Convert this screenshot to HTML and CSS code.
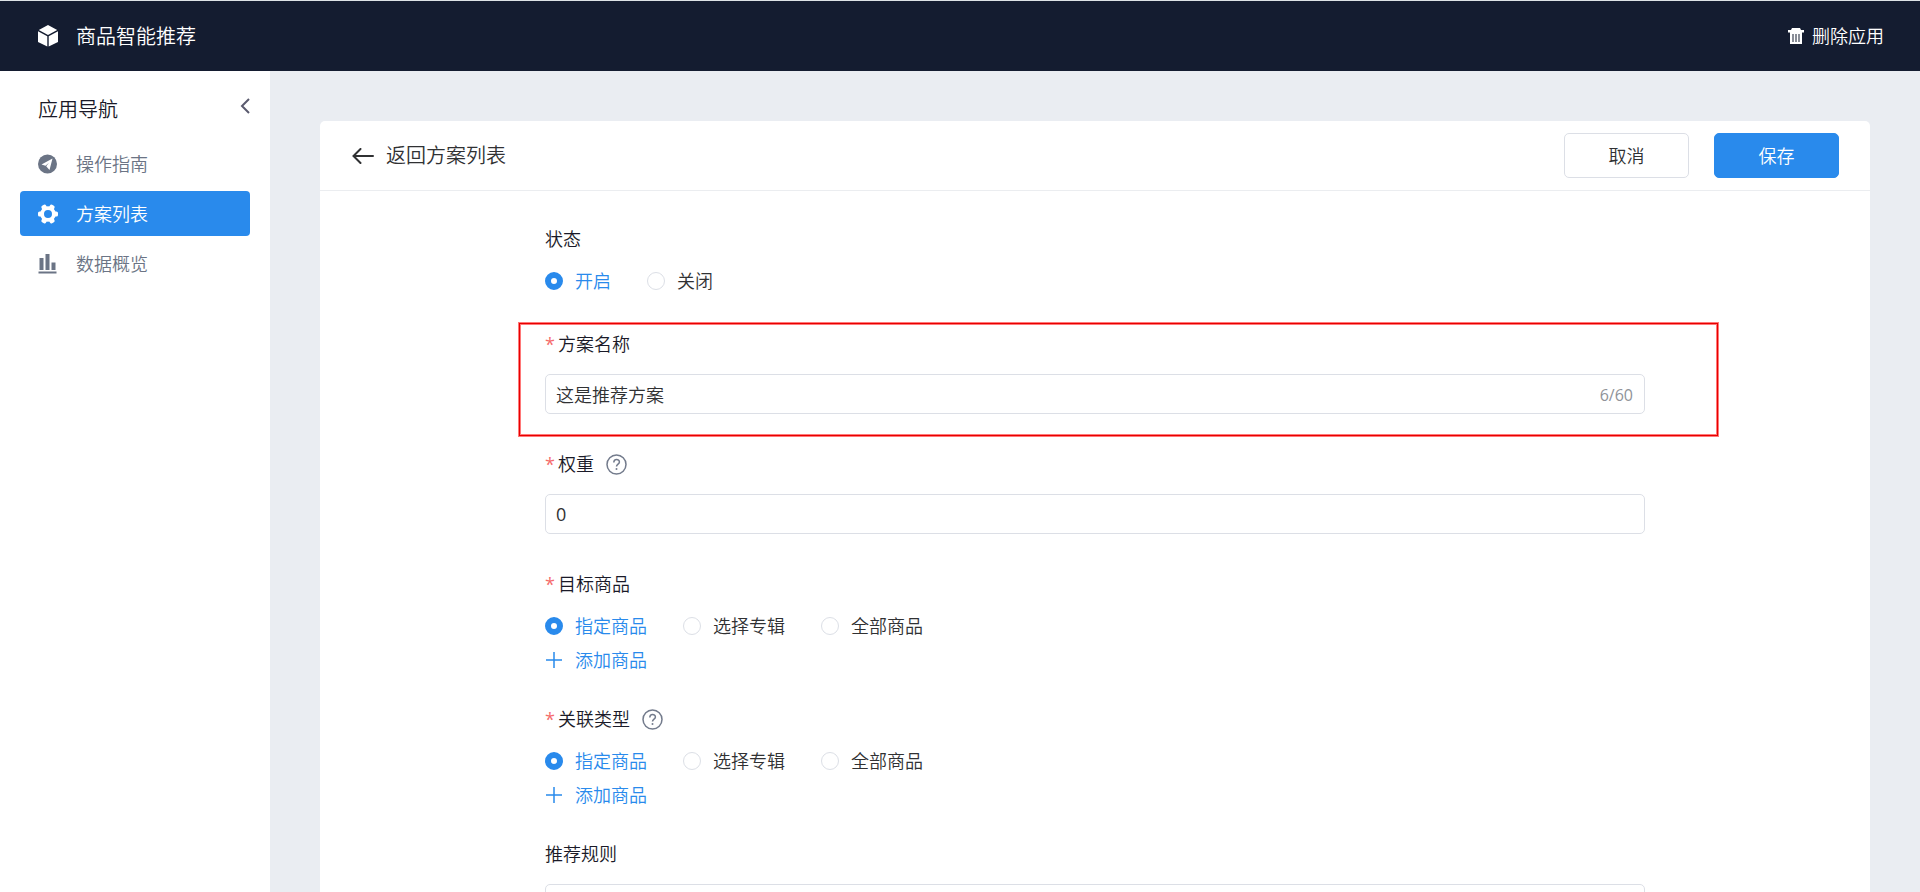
FILE: index.html
```html
<!DOCTYPE html>
<html lang="zh-CN">
<head>
<meta charset="utf-8">
<title>商品智能推荐</title>
<link rel="stylesheet" href="styles.css">
</head>
<body>
<div class="app">
  <header class="topbar">
    <div class="brand">
      <svg class="icon icon-tall" viewBox="0 0 20 22" aria-hidden="true">
        <path fill="currentColor" d="M10 0 19.200 5 10 10 .8 5zM0 6.200 9.300 11.200V21.600L0 17zM20 6.200 10.700 11.200V21.600L20 17z"/>
      </svg>
      <span class="brand-name">商品智能推荐</span>
    </div>
    <button class="delete-app" type="button">
      <svg class="trash" viewBox="0 0 16 16" aria-hidden="true">
        <path fill="currentColor" fill-rule="evenodd" d="M4 0h8l1 2h3v2.500h-2v11.500H2V4.500H0V2h3zM4.500 6v8h1V6zM7.500 6v8h1V6zM10.500 6v8h1V6z"/>
      </svg>
      删除应用
    </button>
  </header>
  <div class="body">
    <aside class="sidebar">
      <div class="sidebar-head">
        <h2 class="sidebar-title">应用导航</h2>
        <button class="collapse" type="button" aria-label="收起">
          <svg viewBox="0 0 10 16" width="10" height="16" aria-hidden="true"><path fill="none" stroke="currentColor" stroke-width="2" d="M9 1 2 8l7 7"/></svg>
        </button>
      </div>
      <nav class="nav">
        <a class="nav-item" href="#guide">
          <svg class="icon" viewBox="0 0 20 20" aria-hidden="true">
            <circle cx="9.500" cy="10" r="9.500" fill="currentColor"/>
            <path fill="#fff" d="M14.500 4.500 3.500 10.500l4 1.200 3.500-3-2.800 3.600 3.300 3.700z"/>
          </svg>
          操作指南
        </a>
        <a class="nav-item nav-item-active" href="#plans">
          <svg class="icon" viewBox="0 0 20 20" aria-hidden="true">
            <g fill="currentColor">
              <path fill-rule="evenodd" d="M10 2.200a7.800 7.800 0 1 0 0 15.600 7.800 7.800 0 0 0 0-15.600zm0 3.800a4 4 0 1 1 0 8 4 4 0 0 1 0-8z"/>
              <rect id="tooth" x="0" y="7.400" width="4.500" height="5.200" rx="1.600"/>
              <use href="#tooth" transform="rotate(60 10 10)"/>
              <use href="#tooth" transform="rotate(120 10 10)"/>
              <use href="#tooth" transform="rotate(180 10 10)"/>
              <use href="#tooth" transform="rotate(240 10 10)"/>
              <use href="#tooth" transform="rotate(300 10 10)"/>
            </g>
          </svg>
          方案列表
        </a>
        <a class="nav-item" href="#data">
          <svg class="icon" viewBox="0 0 20 20" aria-hidden="true">
            <path fill="currentColor" d="M1.500 4h4v12h-4zM7.500 0h4v16h-4zM13.500 8.500h4V16h-4zM.5 17.500h18v2H.5z"/>
          </svg>
          数据概览
        </a>
      </nav>
    </aside>
    <main class="main">
      <form class="card">
        <div class="card-head">
          <a class="back" href="#plans">
            <svg viewBox="0 0 22 16" width="22" height="16" aria-hidden="true"><path fill="none" stroke="currentColor" stroke-width="2" stroke-linecap="round" d="M8.500 1 1.500 8l7 7M2 8h19"/></svg>
            返回方案列表
          </a>
          <div class="actions">
            <button class="btn" type="button">取消</button>
            <button class="btn btn-primary" type="submit">保存</button>
          </div>
        </div>
        <div class="fields">
          <div class="field" role="radiogroup" aria-labelledby="l-status">
            <div class="label" id="l-status">状态</div>
            <div class="radios">
              <label class="radio"><input type="radio" name="status" checked><span>开启</span></label>
              <label class="radio"><input type="radio" name="status"><span>关闭</span></label>
            </div>
          </div>
          <div class="field field-text field-marked">
            <label class="label required" for="name">方案名称</label>
            <div class="input-wrap">
              <input class="input" id="name" type="text" maxlength="60" value="这是推荐方案">
              <span class="count">6/60</span>
            </div>
          </div>
          <div class="field field-text">
            <div class="label-row">
              <label class="label required" for="weight">权重</label>
              <svg class="help" viewBox="0 0 21 21" aria-hidden="true"><g fill="none" stroke="currentColor" stroke-width="1.500"><circle cx="10.500" cy="10.500" r="9.500"/><path d="M7.800 8.500c0-3.900 5.600-3.800 5.600-.5 0 2.200-2.900 2.100-2.900 4.600"/></g><circle cx="10.500" cy="15" r="1" fill="currentColor"/></svg>
            </div>
            <div class="input-wrap"><input class="input input-number" id="weight" type="text" value="0"></div>
          </div>
          <div class="field" role="radiogroup" aria-labelledby="l-target">
            <div class="label required" id="l-target">目标商品</div>
            <div class="radios">
              <label class="radio"><input type="radio" name="target" checked><span>指定商品</span></label>
              <label class="radio"><input type="radio" name="target"><span>选择专辑</span></label>
              <label class="radio"><input type="radio" name="target"><span>全部商品</span></label>
            </div>
            <button class="add" type="button">
              <svg viewBox="0 0 18 18" width="18" height="18" aria-hidden="true"><path fill="none" stroke="currentColor" stroke-width="1.500" d="M9 1v16M1 9h16"/></svg>
              添加商品
            </button>
          </div>
          <div class="field" role="radiogroup" aria-labelledby="l-relation">
            <div class="label-row">
              <div class="label required" id="l-relation">关联类型</div>
              <svg class="help" viewBox="0 0 21 21" aria-hidden="true"><g fill="none" stroke="currentColor" stroke-width="1.500"><circle cx="10.500" cy="10.500" r="9.500"/><path d="M7.800 8.500c0-3.900 5.600-3.800 5.600-.5 0 2.200-2.900 2.100-2.900 4.600"/></g><circle cx="10.500" cy="15" r="1" fill="currentColor"/></svg>
            </div>
            <div class="radios">
              <label class="radio"><input type="radio" name="relation" checked><span>指定商品</span></label>
              <label class="radio"><input type="radio" name="relation"><span>选择专辑</span></label>
              <label class="radio"><input type="radio" name="relation"><span>全部商品</span></label>
            </div>
            <button class="add" type="button">
              <svg viewBox="0 0 18 18" width="18" height="18" aria-hidden="true"><path fill="none" stroke="currentColor" stroke-width="1.500" d="M9 1v16M1 9h16"/></svg>
              添加商品
            </button>
          </div>
          <div class="field field-text">
            <label class="label" for="rule">推荐规则</label>
            <div class="input-wrap"><input class="input" id="rule" type="text"></div>
          </div>
        </div>
      </form>
    </main>
  </div>
</div>
</body>
</html>
```
FILE: styles.css
```css
* {
  box-sizing: border-box;
}

body {
  margin: 0;
  color: #303133;
  font-family: "Open Sans", "Noto Sans CJK SC", sans-serif;
  font-size: 18px;
  font-weight: 350;
  line-height: 30px;
}

button,
input {
  font: inherit;
  color: inherit;
}

button {
  padding: 0;
  border: 0;
  background: none;
  cursor: pointer;
}

a {
  color: inherit;
  text-decoration: none;
}

svg {
  flex: none;
  display: block;
}

.app {
  display: flex;
  flex-direction: column;
  height: 100vh;
  overflow: hidden;
}

.topbar {
  flex: none;
  display: flex;
  align-items: center;
  justify-content: space-between;
  height: 71px;
  padding: 0 36px 0 38px;
  border-top: 1px solid #dee3e6;
  background: #141c30;
  color: #fff;
}

.brand {
  display: flex;
  align-items: center;
  gap: 18px;
  font-size: 20px;
}

.brand-name {
  padding-top: 2px;
}

.icon {
  width: 20px;
  height: 20px;
}

.icon-tall {
  height: 22px;
}

.delete-app {
  display: flex;
  align-items: center;
  gap: 8px;
}

.trash {
  width: 16px;
  height: 16px;
}

.body {
  flex: 1;
  display: flex;
  min-height: 0;
}

.sidebar {
  flex: none;
  width: 270px;
  padding: 20px;
  background: #fff;
}

.sidebar-head {
  display: flex;
  align-items: flex-start;
  justify-content: space-between;
  height: 32px;
  padding-left: 18px;
  margin-bottom: 18px;
}

.sidebar-title {
  margin: 0;
  padding-top: 4px;
  color: #1a1a28;
  font-size: 20px;
  font-weight: inherit;
}

.collapse {
  padding-top: 7px;
  color: #5a5a6e;
}

.nav {
  display: flex;
  flex-direction: column;
  gap: 5px;
}

.nav-item {
  display: flex;
  align-items: center;
  gap: 18px;
  height: 45px;
  padding: 0 18px;
  border-radius: 4px;
  color: #6b7485;
}

.nav-item-active {
  background: #298aec;
  color: #fff;
}

.main {
  flex: 1;
  min-width: 0;
  padding: 50px 50px 0;
  background: #eaedf2;
}

.card {
  min-height: 100%;
  border-radius: 5px;
  background: #fff;
}

.card-head {
  display: flex;
  align-items: center;
  justify-content: space-between;
  height: 70px;
  padding: 0 31px 0 32px;
  border-bottom: 1px solid #ebedf0;
}

.back {
  display: flex;
  align-items: center;
  gap: 12px;
  font-size: 20px;
}

.actions {
  display: flex;
  gap: 25px;
}

.btn {
  width: 125px;
  height: 45px;
  border: 1px solid #dcdfe6;
  border-radius: 5px;
  background: #fff;
}

.btn-primary {
  border-color: #298aec;
  background: #298aec;
  color: #fff;
}

.fields {
  display: flex;
  flex-direction: column;
  gap: 29px;
  max-width: 1100px;
  margin: 0 auto;
  padding: 33px 0;
}

.field {
  position: relative;
}

.field-text {
  margin-bottom: 6px;
}

.field-marked::before {
  content: "";
  position: absolute;
  inset: -6px -73px -22px -26px;
  border: 1px solid #e80000;
  box-shadow: 0 0 0 1px #ff7878, inset 0 0 0 1px #ff7878;
  pointer-events: none;
}

.label {
  display: block;
  color: #1a1a28;
}

.label-row {
  display: flex;
  align-items: center;
  gap: 12px;
}

.required::before {
  content: "*";
  margin-right: 3px;
  color: #f56c6c;
  font-weight: 400;
}

.help {
  width: 21px;
  height: 21px;
  color: #737b8c;
}

.input-wrap {
  position: relative;
  margin-top: 15px;
}

.input {
  display: block;
  width: 100%;
  height: 40px;
  padding: 0 10px;
  border: 1px solid #dcdfe6;
  border-radius: 5px;
  background: #fff;
}

.input-number {
  font-weight: 400;
}

.count {
  position: absolute;
  top: 6px;
  right: 12px;
  color: #909399;
  font-size: 16px;
  font-weight: 400;
}

.radios {
  display: flex;
  gap: 36px;
  margin: 12px 0 4px;
}

.radio {
  display: flex;
  align-items: center;
  gap: 12px;
}

.radio input {
  appearance: none;
  width: 18px;
  height: 18px;
  margin: 0;
  border: 1px solid #dcdfe6;
  border-radius: 50%;
}

.radio input:checked {
  border: 6px solid #298aec;
}

.radio input:checked + span {
  color: #298aec;
}

.add {
  display: flex;
  align-items: center;
  gap: 12px;
  color: #298aec;
}
```
